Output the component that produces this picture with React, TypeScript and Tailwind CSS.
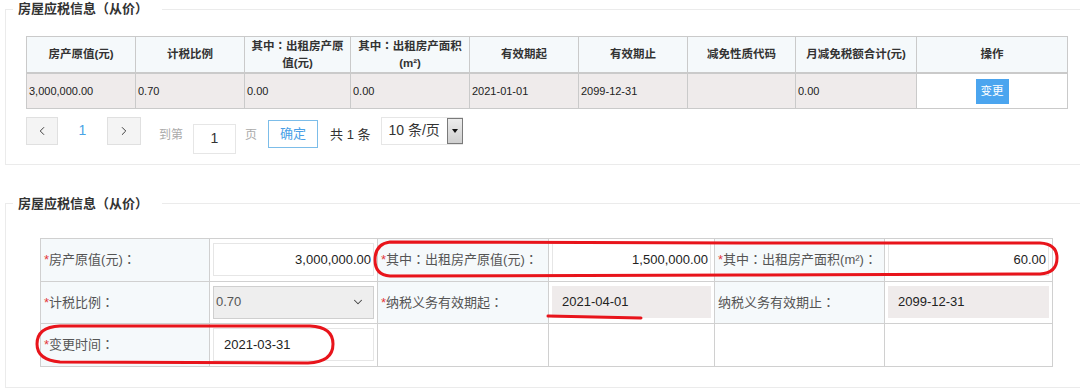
import { ChevronDown, ChevronLeft, ChevronRight } from "lucide-react";
import type { ReactNode } from "react";

// 第二项为换行后的内容
const headers: [string, string?][] = [
  ["房产原值(元)"],
  ["计税比例"],
  ["其中：出租房产原", "值(元)"],
  ["其中：出租房产面积", "(m²)"],
  ["有效期起"],
  ["有效期止"],
  ["减免性质代码"],
  ["月减免税额合计(元)"],
  ["操作"],
];

const rowValues = ["3,000,000.00", "0.70", "0.00", "0.00", "2021-01-01", "2099-12-31", "", "0.00"];

// 全角冒号居中显示
const withColon = (text: string) =>
  text.split("：").flatMap((part, i) =>
    i === 0
      ? [part]
      : [
          <span key={i} className="font-['Noto_Sans_CJK_JP',sans-serif]">
            ：
          </span>,
          part,
        ]
  );

const Legend = ({ className }: { className: string }) => (
  <legend className={className + " pl-[5px] pr-[14px] text-[13px] font-bold leading-[18px] text-[#333]"}>
    房屋应税信息（从价）
  </legend>
);

const Label = ({ text, required = false }: { text: string; required?: boolean }) => (
  <td className="border border-[#d0d0d0] bg-[#f5f9fb] pl-[3px] text-[13px] whitespace-nowrap text-[#555]">
    {required && <span className="text-[#e4393c]">*</span>}
    {withColon(text)}
  </td>
);

const Field = ({ children }: { children?: ReactNode }) => (
  <td className="border border-[#d0d0d0] bg-white px-[3px]">{children}</td>
);

const TextBox = ({ value, right = false }: { value: string; right?: boolean }) => (
  <div
    className={
      right
        ? "flex h-[33px] items-center justify-end border border-[#e6e6e6] bg-white pr-[2px] text-[13px] text-[#222]"
        : "flex h-[33px] items-center border border-[#e6e6e6] bg-white pl-[10px] text-[13px] text-[#222]"
    }
  >
    {value}
  </div>
);

const ReadOnlyBox = ({ value }: { value: string }) => (
  <div className="flex h-[32px] items-center bg-[#efebeb] pl-[10px] text-[13px] text-[#222]">{value}</div>
);

export default function App() {
  return (
    <div className="h-[391px] w-[1080px] overflow-hidden bg-white font-['Liberation_Sans','Noto_Sans_CJK_SC',sans-serif]">
      {/* 列表 */}
      <fieldset className="ml-[5px] w-[1100px] border border-[#ebebeb] pb-[10px] pl-[20px]">
        <Legend className="ml-[-13px]" />
        <table className="mt-[18px] w-[1041px] table-fixed border-collapse">
          <colgroup>
            <col className="w-[109px]" />
            <col className="w-[109px]" />
            <col className="w-[106px]" />
            <col className="w-[119px]" />
            <col className="w-[109px]" />
            <col className="w-[109px]" />
            <col className="w-[108px]" />
            <col className="w-[121px]" />
            <col className="w-[151px]" />
          </colgroup>
          <thead>
            <tr className="h-[35px]">
              {headers.map(([line1, line2]) => (
                <th
                  key={line1}
                  className="border border-b-2 border-[#cacaca] bg-[#f5f9fb] px-[2px] text-center text-[11.5px] leading-[17px] font-bold whitespace-nowrap text-[#333]"
                >
                  {withColon(line1)}
                  {line2 && (
                    <>
                      <br />
                      {line2}
                    </>
                  )}
                </th>
              ))}
            </tr>
          </thead>
          <tbody>
            <tr className="h-[35px]">
              {rowValues.map((v, i) => (
                <td key={i} className="border border-[#cacaca] bg-[#efebeb] px-[2px] text-[11px] text-[#222]">
                  {v}
                </td>
              ))}
              <td className="border border-[#cacaca] bg-white text-center">
                <button className="h-[25px] w-[33px] bg-[#4ba5ef] text-[11.5px] text-white">变更</button>
              </td>
            </tr>
          </tbody>
        </table>

        {/* 分页 */}
        <div className="mt-[8px] flex h-[37px] items-start text-[13px]">
          <button className="flex h-[28px] w-[32px] items-center justify-center border border-[#e0e0e0] bg-[#f4f4f4] text-[#333]">
            <ChevronLeft size={14} strokeWidth={1.6} />
          </button>
          <span className="flex h-[28px] w-[49px] items-center justify-center text-[14px] text-[#4aa3e6]">1</span>
          <button className="flex h-[28px] w-[34px] items-center justify-center border border-[#e0e0e0] bg-[#f4f4f4] text-[#333]">
            <ChevronRight size={14} strokeWidth={1.6} />
          </button>
          <span className="ml-[18px] mt-[9px] text-[12px] text-[#aaa]">到第</span>
          <div className="ml-[10px] mt-[7px] flex h-[30px] w-[43px] items-center justify-center border border-[#e6e6e6] text-[14px] text-[#333]">
            1
          </div>
          <span className="ml-[9px] mt-[9px] text-[12px] text-[#aaa]">页</span>
          <button className="ml-[11px] mt-[3px] h-[28px] w-[50px] border border-[#7cbde9] text-[13px] text-[#4a9fe6]">
            确定
          </button>
          <span className="ml-[12px] mt-[8px] text-[13px] text-[#333]">共 1 条</span>
          <div className="ml-[10px] flex h-[28px] w-[82px] items-center border border-[#e6e6e6] pl-[7px] text-[14px] text-[#333]">
            <span className="flex-1">10 条/页</span>
            <span className="mr-[-1px] flex h-[26px] w-[16px] items-center justify-center border border-[#7a7a7a] bg-gradient-to-b from-[#ececec] to-[#cfcfcf]">
              <svg width="6" height="4" viewBox="0 0 6 4">
                <path d="M0 0 L6 0 L3 4 Z" fill="#111" />
              </svg>
            </span>
          </div>
        </div>
      </fieldset>

      {/* 表单 */}
      <fieldset className="ml-[5px] mt-[30px] w-[1100px] border border-[#ebebeb] pb-[20px] pl-[34px]">
        <Legend className="ml-[-27px]" />
        <div className="relative mt-[25px] w-[1012px]">
          <table className="w-[1012px] table-fixed border-collapse">
            <colgroup>
              <col className="w-[169px]" />
              <col className="w-[168px]" />
              <col className="w-[171px]" />
              <col className="w-[166px]" />
              <col className="w-[170px]" />
              <col className="w-[168px]" />
            </colgroup>
            <tbody>
              <tr className="h-[43px]">
                <Label text="房产原值(元)：" required />
                <Field>
                  <TextBox value="3,000,000.00" right />
                </Field>
                <Label text="其中：出租房产原值(元)：" required />
                <Field>
                  <TextBox value="1,500,000.00" right />
                </Field>
                <Label text="其中：出租房产面积(m²)：" required />
                <Field>
                  <TextBox value="60.00" right />
                </Field>
              </tr>
              <tr className="h-[42px]">
                <Label text="计税比例：" required />
                <Field>
                  <div className="flex h-[33px] items-center justify-between border border-[#cfcfcf] bg-[#eeeeee] pl-[2px] pr-[8px] text-[13px] text-[#555]">
                    0.70
                    <ChevronDown size={14} strokeWidth={1.8} className="text-[#444]" />
                  </div>
                </Field>
                <Label text="纳税义务有效期起：" required />
                <Field>
                  <ReadOnlyBox value="2021-04-01" />
                </Field>
                <Label text="纳税义务有效期止：" />
                <Field>
                  <ReadOnlyBox value="2099-12-31" />
                </Field>
              </tr>
              <tr className="h-[43px]">
                <Label text="变更时间：" required />
                <Field>
                  <TextBox value="2021-03-31" />
                </Field>
                <Field />
                <Field />
                <Field />
                <Field />
              </tr>
            </tbody>
          </table>

          {/* 红色标注 */}
          <svg
            className="pointer-events-none absolute left-0 top-0 overflow-visible"
            width="1012"
            height="128"
            fill="none"
            stroke="#e8141b"
            strokeWidth="3"
            strokeLinejoin="round"
            strokeLinecap="round"
          >
            <path d="M350 4 L700 5 L1000 5 Q1017 6 1017 20 Q1017 35 1000 36 L700 37 L350 38 Q335 37 335 22 Q335 6 350 4 Z" />
            <path d="M20 88 L270 88 Q293 89 293 106 Q293 124 268 125 L20 124 Q-3 122 -3 106 Q-3 89 20 88 Z" />
            <path d="M508 78 Q555 79 601 80" />
          </svg>
        </div>
      </fieldset>
    </div>
  );
}
